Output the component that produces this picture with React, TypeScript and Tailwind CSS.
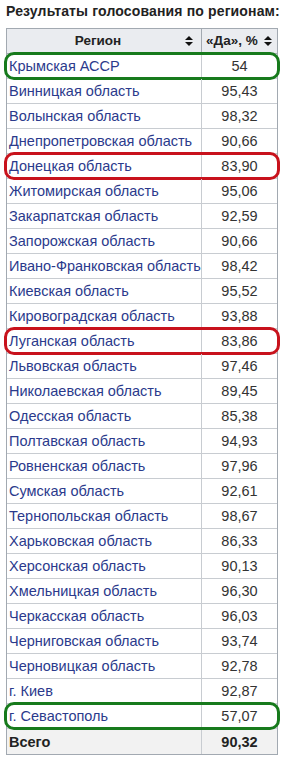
import React from "react";

type Row = { region: string; yes: string; mark?: "green" | "red" };

const rows: Row[] = [
  { region: "Крымская АССР", yes: "54", mark: "green" },
  { region: "Винницкая область", yes: "95,43" },
  { region: "Волынская область", yes: "98,32" },
  { region: "Днепропетровская область", yes: "90,66" },
  { region: "Донецкая область", yes: "83,90", mark: "red" },
  { region: "Житомирская область", yes: "95,06" },
  { region: "Закарпатская область", yes: "92,59" },
  { region: "Запорожская область", yes: "90,66" },
  { region: "Ивано-Франковская область", yes: "98,42" },
  { region: "Киевская область", yes: "95,52" },
  { region: "Кировоградская область", yes: "93,88" },
  { region: "Луганская область", yes: "83,86", mark: "red" },
  { region: "Львовская область", yes: "97,46" },
  { region: "Николаевская область", yes: "89,45" },
  { region: "Одесская область", yes: "85,38" },
  { region: "Полтавская область", yes: "94,93" },
  { region: "Ровненская область", yes: "97,96" },
  { region: "Сумская область", yes: "92,61" },
  { region: "Тернопольская область", yes: "98,67" },
  { region: "Харьковская область", yes: "86,33" },
  { region: "Херсонская область", yes: "90,13" },
  { region: "Хмельницкая область", yes: "96,30" },
  { region: "Черкасская область", yes: "96,03" },
  { region: "Черниговская область", yes: "93,74" },
  { region: "Черновицкая область", yes: "92,78" },
  { region: "г. Киев", yes: "92,87" },
  { region: "г. Севастополь", yes: "57,07", mark: "green" },
];

const SortIcon = () => (
  <svg width="8" height="10" viewBox="0 0 8 10" className="shrink-0">
    <path d="M4 0 L8 4 L0 4 Z" fill="#111" />
    <path d="M0 6 L8 6 L4 10 Z" fill="#111" />
  </svg>
);

const App: React.FC = () => {
  return (
    <div
      className="w-[284px] h-[763px] bg-white overflow-hidden"
      style={{ fontFamily: '"Liberation Sans", Arial, sans-serif' }}
    >
      <h2 className="pl-[6px] pt-[2px] h-[28px] text-[14px] font-bold text-[#222] leading-[18px] tracking-[0.15px]">
        Результаты голосования по регионам:
      </h2>

      <div className="ml-[6px] w-[272px] border border-[#a2a9b1] text-[14.5px] leading-[18px]">
        {/* header */}
        <div className="flex h-[25px] bg-[#eaecf0] border-b border-[#a2a9b1] font-bold text-[13.5px] text-[#222]">
          <div className="w-[195px] flex items-center border-r border-[#a2a9b1] pr-[8px]">
            <span className="flex-1 text-center pl-[4px]">Регион</span>
            <SortIcon />
          </div>
          <div className="flex-1 flex items-center pl-[4px] pr-[5px]">
            <span className="flex-1">«Да», %</span>
            <SortIcon />
          </div>
        </div>

        {rows.map((r) => (
          <div
            key={r.region}
            className="relative flex h-[25px] border-b border-[#c8ccd1]"
          >
            <div className="w-[195px] flex items-center border-r border-[#c8ccd1] pl-[2px] text-[#2b3a8c] whitespace-nowrap">
              {r.region}
            </div>
            <div className="flex-1 flex items-center justify-center text-[#333]">
              {r.yes}
            </div>
            {r.mark && (
              <div
                className={`absolute -left-[3px] -right-[3px] -top-[2px] -bottom-[2px] rounded-[10px] border-[3px] ${
                  r.mark === "green" ? "border-[#177a1c]" : "border-[#c8121c]"
                }`}
              />
            )}
          </div>
        ))}

        {/* total */}
        <div className="flex h-[25px] bg-[#f2f2f2] font-bold text-[#222]">
          <div className="w-[195px] flex items-center border-r border-[#c8ccd1] pl-[2px]">
            Всего
          </div>
          <div className="flex-1 flex items-center justify-center">90,32</div>
        </div>
      </div>
    </div>
  );
};

export default App;
